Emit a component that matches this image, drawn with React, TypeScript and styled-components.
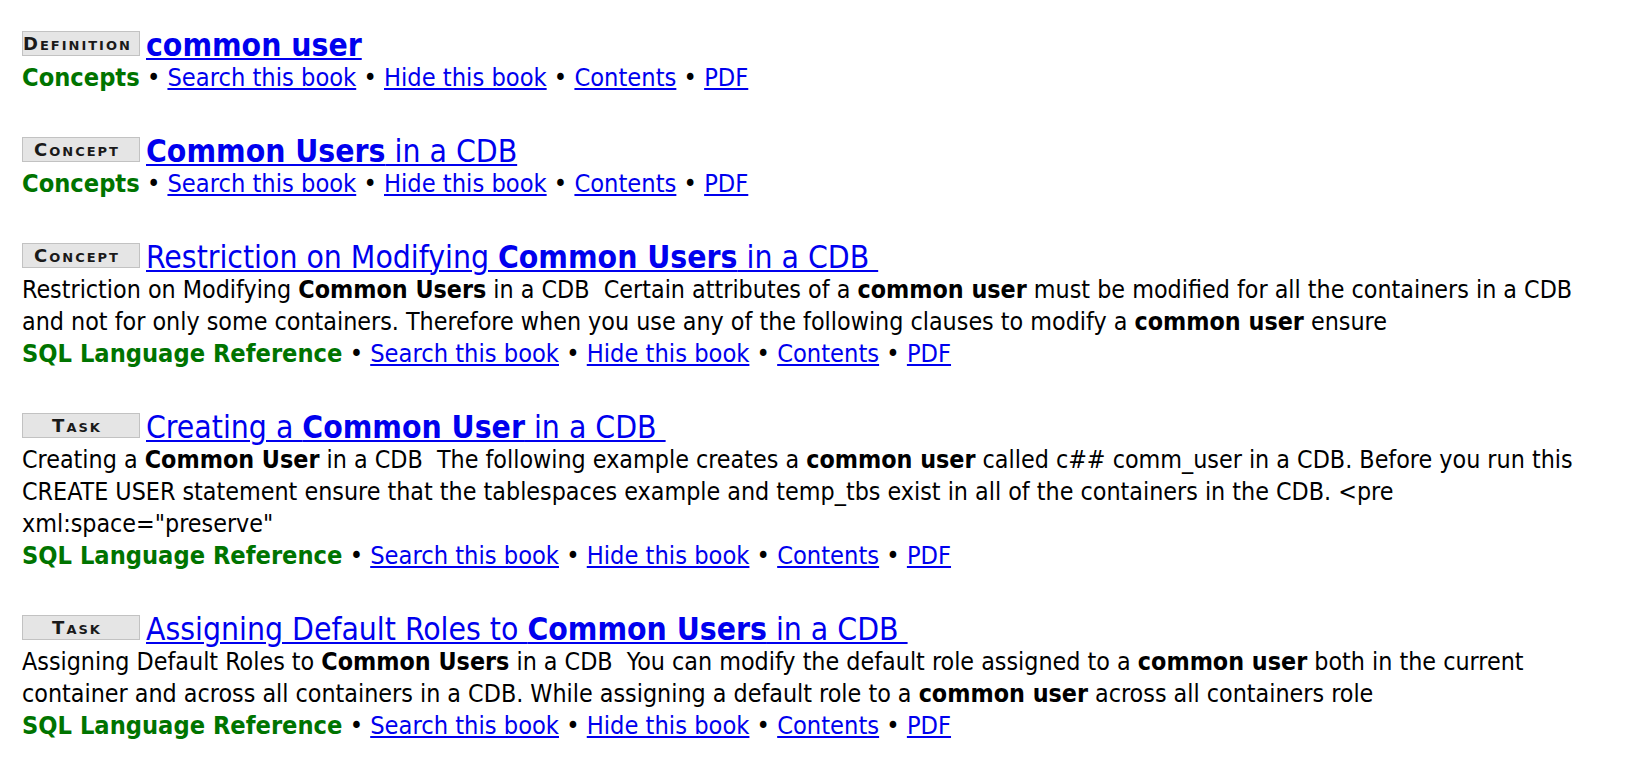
import { FC, ReactNode } from "react"
import styled, { createGlobalStyle } from "styled-components"

const GlobalStyle = createGlobalStyle`
  body {
    margin: 0;
    background: #fff;
    color: #000;
    font-family: "DejaVu Sans Condensed", "DejaVu Sans", sans-serif;
    font-stretch: condensed;
  }
`

const Page = styled.div`
  padding: 28px 22px 0;
`

const ResultList = styled.div`
  max-width: 1580px;
`

const Result = styled.div`
  margin-bottom: 40px;
`

const TitleRow = styled.div`
  font-size: 31.6px;
  line-height: 34px;
  white-space: nowrap;
`

const Badge = styled.span`
  display: inline-block;
  box-sizing: border-box;
  width: 118px;
  height: 25px;
  margin-right: 6px;
  padding-right: 8px;
  overflow: hidden;
  vertical-align: baseline;
  background: #e5e5e5;
  border: 1px solid #c2c2c2;
  color: #1a1a1a;
  font-family: "DejaVu Sans", sans-serif;
  font-stretch: normal;
  font-size: 18px;
  font-weight: bold;
  font-variant: small-caps;
  letter-spacing: 2px;
  line-height: 23px;
  text-align: center;
  text-transform: capitalize;
`

const TitleLink = styled.a`
  color: #0000ee;
  text-decoration: underline;
  text-decoration-thickness: 2px;
  text-underline-offset: 2px;
`

const Snippet = styled.div`
  font-size: 24.8px;
  line-height: 32px;
`

const Meta = styled.div`
  font-size: 25.2px;
  line-height: 32px;
`

const Book = styled.b`
  color: #007400;
`

const MetaLink = styled.a`
  color: #0000ee;
  text-decoration: underline;
`

type ResultType = {
  kind: string
  title: ReactNode
  snippet?: ReactNode
  book: string
}

const results: ResultType[] = [
  {
    kind: "Definition",
    title: <b>common user</b>,
    book: "Concepts",
  },
  {
    kind: "Concept",
    title: <><b>Common Users</b> in a CDB</>,
    book: "Concepts",
  },
  {
    kind: "Concept",
    title: <>Restriction on Modifying <b>Common Users</b> in a CDB&nbsp;</>,
    snippet: <>Restriction on Modifying <b>Common Users</b> in a CDB&nbsp; Certain attributes of a <b>common user</b> must be modified for all the containers in a CDB and not for only some containers. Therefore when you use any of the following clauses to modify a <b>common user</b> ensure</>,
    book: "SQL Language Reference",
  },
  {
    kind: "Task",
    title: <>Creating a <b>Common User</b> in a CDB&nbsp;</>,
    snippet: <>Creating a <b>Common User</b> in a CDB&nbsp; The following example creates a <b>common user</b> called c## comm_user in a CDB. Before you run this CREATE USER statement ensure that the tablespaces example and temp_tbs exist in all of the containers in the CDB. &lt;pre xml:space="preserve"</>,
    book: "SQL Language Reference",
  },
  {
    kind: "Task",
    title: <>Assigning Default Roles to <b>Common Users</b> in a CDB&nbsp;</>,
    snippet: <>Assigning Default Roles to <b>Common Users</b> in a CDB&nbsp; You can modify the default role assigned to a <b>common user</b> both in the current container and across all containers in a CDB. While assigning a default role to a <b>common user</b> across all containers role</>,
    book: "SQL Language Reference",
  },
]

const ResultItem: FC<{ result: ResultType }> = ({ result }) => (
  <Result>
    <TitleRow>
      <Badge>{result.kind}</Badge>
      <TitleLink href="#">{result.title}</TitleLink>
    </TitleRow>
    {result.snippet && <Snippet>{result.snippet}</Snippet>}
    <Meta>
      <Book>{result.book}</Book>
      {" • "}<MetaLink href="#">Search this book</MetaLink>
      {" • "}<MetaLink href="#">Hide this book</MetaLink>
      {" • "}<MetaLink href="#">Contents</MetaLink>
      {" • "}<MetaLink href="#">PDF</MetaLink>
    </Meta>
  </Result>
)

const App: FC = () => (
  <>
    <GlobalStyle />
    <Page>
      <ResultList>
        {results.map((r, i) => <ResultItem key={i} result={r} />)}
      </ResultList>
    </Page>
  </>
)

export default App
